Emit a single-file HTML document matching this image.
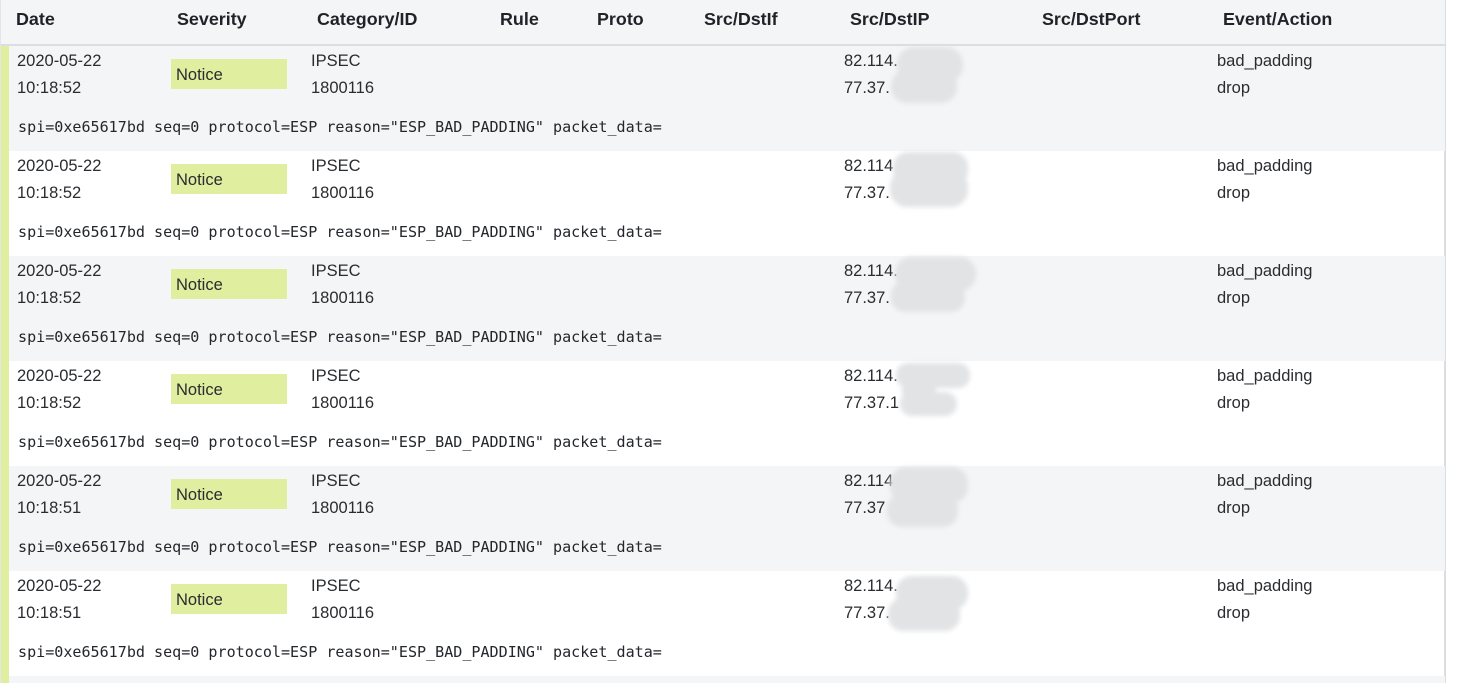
<!DOCTYPE html>
<html><head><meta charset="utf-8"><style>
html,body{margin:0;padding:0;background:#fff}
body{width:1459px;height:683px;position:relative;overflow:hidden;font-family:"Liberation Sans",sans-serif;font-size:16.5px;color:#2a2c30}
div{position:absolute;white-space:nowrap}
.h{top:9px;line-height:20px;font-weight:700;color:#1f2227;font-size:17.9px}
.r{left:9px;width:1436px;height:105px}
.g{background:#f4f5f7}
.t{line-height:20px}
.n{left:162px;top:13px;width:116px;height:30px;background:#dfee9f;line-height:32px;text-indent:5px}
.m{left:9px;top:71px;line-height:20px;font-family:"DejaVu Sans Mono","Liberation Mono",monospace;font-size:15.07px;color:#23262b}
</style></head><body>
<div style="left:0;top:0;width:1446px;height:45px;background:#f4f5f7"></div>
<div class="h" style="left:16px">Date</div>
<div class="h" style="left:177px">Severity</div>
<div class="h" style="left:317px">Category/ID</div>
<div class="h" style="left:500px">Rule</div>
<div class="h" style="left:597px">Proto</div>
<div class="h" style="left:704px">Src/DstIf</div>
<div class="h" style="left:850px">Src/DstIP</div>
<div class="h" style="left:1042px">Src/DstPort</div>
<div class="h" style="left:1223px">Event/Action</div>

<div class="r g" style="top:46px"><div class="t" style="left:8px;top:5px">2020-05-22</div><div class="t" style="left:8px;top:32px">10:18:52</div><div class="n">Notice</div><div class="t" style="left:302px;top:5px">IPSEC</div><div class="t" style="left:302px;top:32px">1800116</div><div class="t" style="left:835px;top:5px">82.114.</div><div class="t" style="left:835px;top:32px">77.37.</div><div class="t" style="left:1208px;top:5px">bad_padding</div><div class="t" style="left:1208px;top:32px">drop</div><div class="m">spi=0xe65617bd seq=0 protocol=ESP reason="ESP_BAD_PADDING" packet_data=</div></div>
<div class="r" style="top:151px"><div class="t" style="left:8px;top:5px">2020-05-22</div><div class="t" style="left:8px;top:32px">10:18:52</div><div class="n">Notice</div><div class="t" style="left:302px;top:5px">IPSEC</div><div class="t" style="left:302px;top:32px">1800116</div><div class="t" style="left:835px;top:5px">82.114</div><div class="t" style="left:835px;top:32px">77.37.</div><div class="t" style="left:1208px;top:5px">bad_padding</div><div class="t" style="left:1208px;top:32px">drop</div><div class="m">spi=0xe65617bd seq=0 protocol=ESP reason="ESP_BAD_PADDING" packet_data=</div></div>
<div class="r g" style="top:256px"><div class="t" style="left:8px;top:5px">2020-05-22</div><div class="t" style="left:8px;top:32px">10:18:52</div><div class="n">Notice</div><div class="t" style="left:302px;top:5px">IPSEC</div><div class="t" style="left:302px;top:32px">1800116</div><div class="t" style="left:835px;top:5px">82.114.</div><div class="t" style="left:835px;top:32px">77.37.</div><div class="t" style="left:1208px;top:5px">bad_padding</div><div class="t" style="left:1208px;top:32px">drop</div><div class="m">spi=0xe65617bd seq=0 protocol=ESP reason="ESP_BAD_PADDING" packet_data=</div></div>
<div class="r" style="top:361px"><div class="t" style="left:8px;top:5px">2020-05-22</div><div class="t" style="left:8px;top:32px">10:18:52</div><div class="n">Notice</div><div class="t" style="left:302px;top:5px">IPSEC</div><div class="t" style="left:302px;top:32px">1800116</div><div class="t" style="left:835px;top:5px">82.114.</div><div class="t" style="left:835px;top:32px">77.37.1</div><div class="t" style="left:1208px;top:5px">bad_padding</div><div class="t" style="left:1208px;top:32px">drop</div><div class="m">spi=0xe65617bd seq=0 protocol=ESP reason="ESP_BAD_PADDING" packet_data=</div></div>
<div class="r g" style="top:466px"><div class="t" style="left:8px;top:5px">2020-05-22</div><div class="t" style="left:8px;top:32px">10:18:51</div><div class="n">Notice</div><div class="t" style="left:302px;top:5px">IPSEC</div><div class="t" style="left:302px;top:32px">1800116</div><div class="t" style="left:835px;top:5px">82.114</div><div class="t" style="left:835px;top:32px">77.37</div><div class="t" style="left:1208px;top:5px">bad_padding</div><div class="t" style="left:1208px;top:32px">drop</div><div class="m">spi=0xe65617bd seq=0 protocol=ESP reason="ESP_BAD_PADDING" packet_data=</div></div>
<div class="r" style="top:571px"><div class="t" style="left:8px;top:5px">2020-05-22</div><div class="t" style="left:8px;top:32px">10:18:51</div><div class="n">Notice</div><div class="t" style="left:302px;top:5px">IPSEC</div><div class="t" style="left:302px;top:32px">1800116</div><div class="t" style="left:835px;top:5px">82.114.</div><div class="t" style="left:835px;top:32px">77.37.</div><div class="t" style="left:1208px;top:5px">bad_padding</div><div class="t" style="left:1208px;top:32px">drop</div><div class="m">spi=0xe65617bd seq=0 protocol=ESP reason="ESP_BAD_PADDING" packet_data=</div></div>
<div class="r g" style="top:676px;height:7px"></div>

<div style="left:0;top:44px;width:1446px;height:2px;background:#dcdde0"></div>
<div style="left:1px;top:46px;width:8px;height:637px;background:#dfee9f"></div>
<div style="left:0;top:0;width:1px;height:683px;background:#e4e5e8"></div>
<div style="left:1445px;top:0;width:1px;height:683px;background:#dcdde0"></div>
<div style="left:1444px;top:151px;width:2px;height:105px;background:#dcdde0"></div>
<div style="left:1444px;top:361px;width:2px;height:105px;background:#dcdde0"></div>
<div style="left:1444px;top:571px;width:2px;height:105px;background:#dcdde0"></div>

<svg width="1459" height="683" style="position:absolute;left:0;top:0">
<defs><filter id="b" x="-20%" y="-20%" width="140%" height="140%"><feGaussianBlur stdDeviation="2.5"/></filter></defs>
<g fill="#e2e3e5" filter="url(#b)">
<rect x="897" y="47" width="66" height="36" rx="17"/><rect x="891" y="70" width="66" height="33" rx="16"/>
<rect x="893" y="152" width="75" height="34" rx="15"/><rect x="890" y="170" width="78" height="37" rx="17"/>
<rect x="895" y="257" width="81" height="34" rx="16"/><rect x="891" y="281" width="74" height="31" rx="14"/>
<rect x="896" y="363" width="74" height="25" rx="12"/><rect x="900" y="392" width="57" height="24" rx="12"/><rect x="902" y="380" width="34" height="16"/>
<rect x="890" y="467" width="78" height="36" rx="16"/><rect x="887" y="494" width="71" height="33" rx="15"/>
<rect x="896" y="576" width="72" height="34" rx="16"/><rect x="888" y="598" width="72" height="33" rx="15"/>
</g></svg>
</body></html>
